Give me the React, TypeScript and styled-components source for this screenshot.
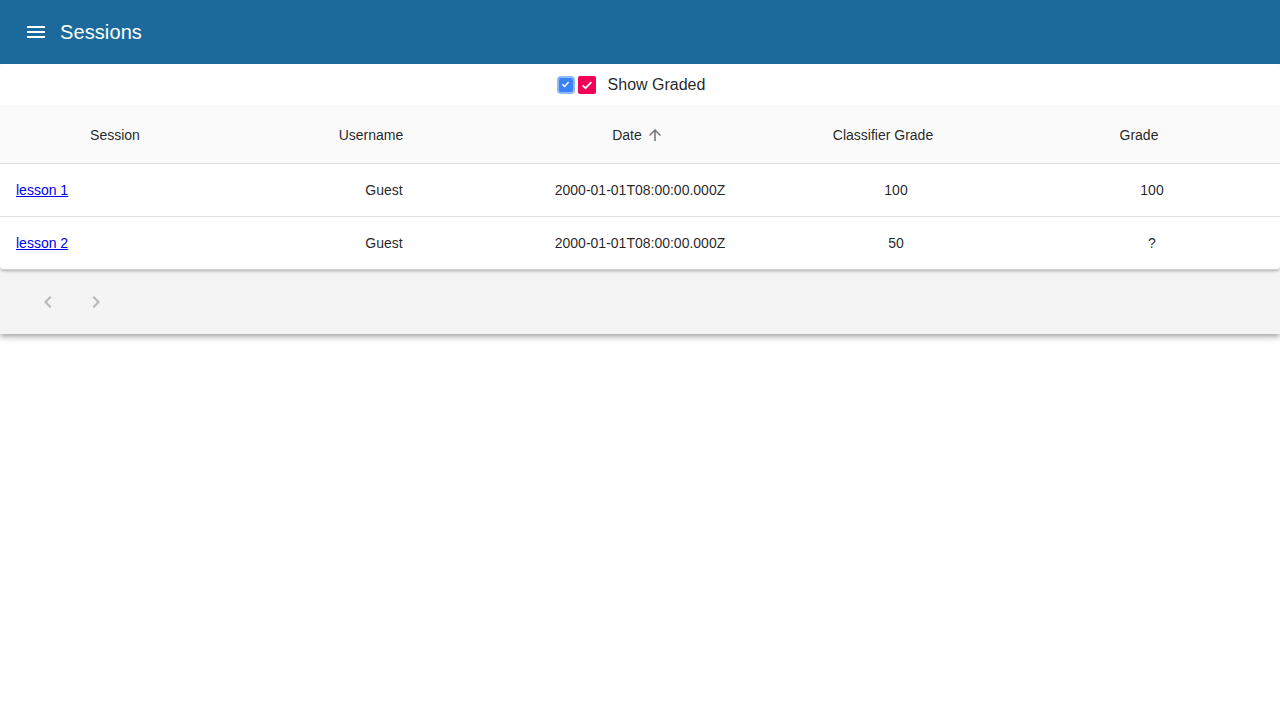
import styled, { createGlobalStyle } from 'styled-components';

const GlobalStyle = createGlobalStyle`
  body {
    margin: 0;
    font-family: "Liberation Sans", Arial, sans-serif;
    background: #fff;
    color: rgba(0, 0, 0, 0.87);
  }
`;

const sessions = [
  { name: 'lesson 1', user: 'Guest', date: '2000-01-01T08:00:00.000Z', classifier: '100', grade: '100' },
  { name: 'lesson 2', user: 'Guest', date: '2000-01-01T08:00:00.000Z', classifier: '50', grade: '?' },
];

const columns = [
  { label: 'Session', sorted: false },
  { label: 'Username', sorted: false },
  { label: 'Date', sorted: true },
  { label: 'Classifier Grade', sorted: false },
  { label: 'Grade', sorted: false },
];

const App = () => {
  return (
    <Page>
      <GlobalStyle />
      <AppBar>
        <MenuButton aria-label="menu">
          <svg width="24" height="24" viewBox="0 0 24 24" fill="#fff">
            <path d="M3 18h18v-2H3v2zm0-5h18v-2H3v2zm0-7v2h18V6H3z" />
          </svg>
        </MenuButton>
        <Title>Sessions</Title>
      </AppBar>

      <Paper>
        <FilterRow>
          <NativeBox>
            <svg width="9" height="9" viewBox="0 0 10 10">
              <path d="M2 5.2l2 2 4-4.4" stroke="#fff" strokeWidth="1.6" fill="none" strokeLinecap="round" strokeLinejoin="round" />
            </svg>
          </NativeBox>
          <PinkBox>
            <svg width="14" height="14" viewBox="0 0 24 24">
              <path d="M4.5 12.5l5 5 10-10.5" stroke="#fff" strokeWidth="3" fill="none" />
            </svg>
          </PinkBox>
          <FilterLabel>Show Graded</FilterLabel>
        </FilterRow>

        <Table>
          <thead>
            <HeadRow>
              {columns.map((c) => (
                <HeadCell key={c.label}>
                  <SortLabel>
                    {c.label}
                    <SortIcon $visible={c.sorted} width="18" height="18" viewBox="0 0 24 24">
                      <path d="M4 12l1.41 1.41L11 7.83V20h2V7.83l5.58 5.59L20 12l-8-8-8 8z" />
                    </SortIcon>
                  </SortLabel>
                </HeadCell>
              ))}
            </HeadRow>
          </thead>
          <tbody>
            {sessions.map((s) => (
              <BodyRow key={s.name}>
                <LinkCell>
                  <a href="#">{s.name}</a>
                </LinkCell>
                <Cell>{s.user}</Cell>
                <Cell>{s.date}</Cell>
                <Cell>{s.classifier}</Cell>
                <Cell>{s.grade}</Cell>
              </BodyRow>
            ))}
          </tbody>
        </Table>
      </Paper>

      <Footer>
        <PageButton aria-label="previous page">
          <svg width="24" height="24" viewBox="0 0 24 24">
            <path d="M15.41 7.41L14 6l-6 6 6 6 1.41-1.41L10.83 12z" />
          </svg>
        </PageButton>
        <PageButton aria-label="next page">
          <svg width="24" height="24" viewBox="0 0 24 24">
            <path d="M10 6L8.59 7.41 13.17 12l-4.58 4.59L10 18l6-6z" />
          </svg>
        </PageButton>
      </Footer>
    </Page>
  );
};

const Page = styled.div`
  min-height: 720px;
  background: #fff;
`;

const AppBar = styled.header`
  height: 64px;
  background: #1b6a9b;
  display: flex;
  align-items: center;
  padding: 0 24px;
  gap: 12px;
  position: relative;
  z-index: 2;
`;

const MenuButton = styled.button`
  width: 24px;
  height: 24px;
  padding: 0;
  border: none;
  background: none;
  display: flex;
  align-items: center;
  justify-content: center;
`;

const Title = styled.h1`
  margin: 0;
  color: #fff;
  font-size: 20px;
  font-weight: 400;
  letter-spacing: 0.1px;
`;

const Paper = styled.div`
  background: #fff;
  border-radius: 4px;
  box-shadow: 0 1px 5px rgba(0, 0, 0, 0.12), 0 2px 2px rgba(0, 0, 0, 0.08), 0 3px 1px -2px rgba(0, 0, 0, 0.08);
  border-bottom: 1px solid #d0d0d0;
  position: relative;
  z-index: 1;
`;

const FilterRow = styled.div`
  height: 41px;
  display: flex;
  align-items: center;
  justify-content: center;
  padding-right: 18px;
`;

const NativeBox = styled.span`
  width: 14px;
  height: 14px;
  border-radius: 4px;
  background: #3a82f6;
  border: 2px solid #8fbaf9;
  display: flex;
  align-items: center;
  justify-content: center;
  margin-right: 3px;
`;

const PinkBox = styled.span`
  width: 18px;
  height: 18px;
  border-radius: 2px;
  background: #f50057;
  display: flex;
  align-items: center;
  justify-content: center;
`;

const FilterLabel = styled.span`
  font-size: 16px;
  margin-left: 12px;
  color: rgba(0, 0, 0, 0.87);
`;

const Table = styled.table`
  width: 100%;
  border-collapse: collapse;
  table-layout: fixed;
`;

const HeadRow = styled.tr`
  background: #fafafa;
  height: 58px;
`;

const HeadCell = styled.th`
  font-size: 14px;
  font-weight: 400;
  color: rgba(0, 0, 0, 0.87);
  text-align: center;
  padding: 2px 16px 0;
  border-bottom: 1px solid #e0e0e0;
`;

const SortLabel = styled.span`
  display: inline-flex;
  align-items: center;
`;

const SortIcon = styled.svg<{ $visible: boolean }>`
  margin: 0 4px;
  fill: rgba(0, 0, 0, 0.54);
  visibility: ${(p) => (p.$visible ? 'visible' : 'hidden')};
`;

const BodyRow = styled.tr`
  height: 53px;
  & + & td {
    border-top: 1px solid #e0e0e0;
  }
`;

const Cell = styled.td`
  font-size: 14px;
  text-align: center;
  padding: 0 16px;
  color: rgba(0, 0, 0, 0.87);
`;

const LinkCell = styled(Cell)`
  text-align: left;
  a {
    color: #0000ee;
    text-decoration: underline;
  }
`;

const Footer = styled.div`
  height: 64px;
  background: #f4f4f4;
  display: flex;
  align-items: center;
  padding: 0 36px;
  gap: 24px;
  box-shadow: 0 2px 4px -1px rgba(0, 0, 0, 0.2), 0 4px 5px 0 rgba(0, 0, 0, 0.14), 0 1px 10px 0 rgba(0, 0, 0, 0.12);
`;

const PageButton = styled.button`
  width: 24px;
  height: 24px;
  padding: 0;
  border: none;
  background: none;
  fill: rgba(0, 0, 0, 0.26);
  display: flex;
  align-items: center;
  justify-content: center;
`;

export default App;
